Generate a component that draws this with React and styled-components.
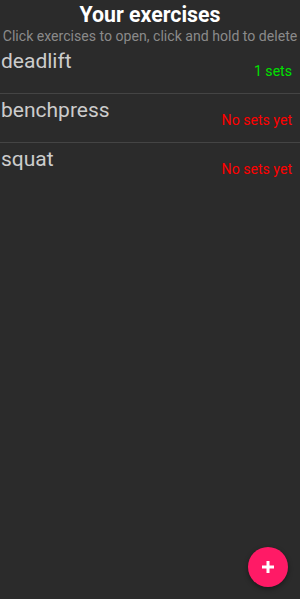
import styled, { createGlobalStyle } from "styled-components";

const Global = createGlobalStyle`
  html, body {
    margin: 0;
    padding: 0;
    background-color: #2b2b2b;
    font-family: Roboto, "Noto Sans", sans-serif;
  }
`;

const Wrap = styled.div`
  width: 300px;
  height: 599px;
  background-color: #2b2b2b;
  position: relative;
  overflow: hidden;
`;

const Header = styled.div`
  text-align: center;
  padding-top: 2px;
`;

const Title = styled.h1`
  margin: 0;
  font-size: 21.3px;
  line-height: 25px;
  font-weight: 700;
  color: #ffffff;
`;

const Hint = styled.p`
  margin: 0;
  font-size: 14.1px;
  line-height: 18px;
  color: #8a8a8a;
  white-space: nowrap;
`;

const List = styled.div``;

const Row = styled.div`
  display: flex;
  justify-content: space-between;
  height: 48px;
  padding: 0 8px 0 1px;
  border-bottom: 1px solid #444444;

  &:last-child {
    border-bottom: none;
  }
`;

const Name = styled.div`
  font-size: 21px;
  line-height: 28px;
  margin-top: 2px;
  color: #cccccc;
`;

const Sets = styled.div`
  font-size: 14.1px;
  margin-top: 18px;
  color: ${(p) => (p.$done ? "#00e000" : "#ff0000")};
`;

const Fab = styled.button`
  position: absolute;
  right: 12px;
  bottom: 12px;
  width: 40px;
  height: 40px;
  border: none;
  border-radius: 50%;
  background-color: #ff1a66;
  box-shadow: 0 2px 5px rgba(0, 0, 0, 0.4);
  display: flex;
  align-items: center;
  justify-content: center;
  padding: 0;
`;

const exercises = [
  { name: "deadlift", sets: 1 },
  { name: "benchpress", sets: 0 },
  { name: "squat", sets: 0 },
];

const App = () => {
  return (
    <Wrap>
      <Global />
      <Header>
        <Title>Your exercises</Title>
        <Hint>Click exercises to open, click and hold to delete</Hint>
      </Header>
      <List>
        {exercises.map((e) => (
          <Row key={e.name}>
            <Name>{e.name}</Name>
            <Sets $done={e.sets > 0}>
              {e.sets > 0 ? `${e.sets} sets` : "No sets yet"}
            </Sets>
          </Row>
        ))}
      </List>
      <Fab>
        <svg width="14" height="14" viewBox="0 0 14 14">
          <path d="M7 1v12M1 7h12" stroke="#fff" strokeWidth="3" />
        </svg>
      </Fab>
    </Wrap>
  );
};

export default App;
